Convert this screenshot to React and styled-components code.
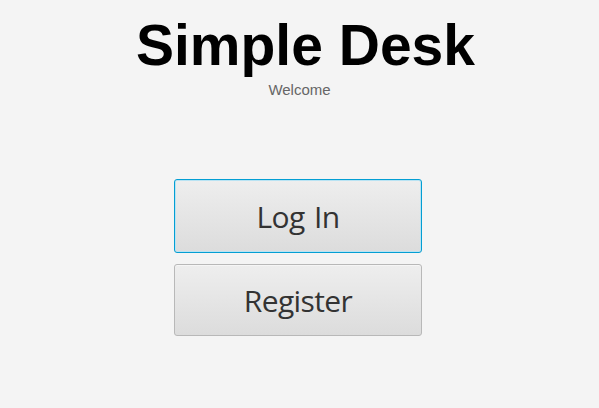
import React from 'react';
import styled, { createGlobalStyle } from 'styled-components';

const GlobalStyle = createGlobalStyle`
  html, body {
    margin: 0;
    padding: 0;
    background: #f4f4f4;
  }
`;

const Screen = styled.div`
  width: 599px;
  height: 408px;
  display: flex;
  flex-direction: column;
  align-items: center;
  background: #f4f4f4;
  padding-top: 17px;
  box-sizing: border-box;
`;

const Title = styled.h1`
  margin: 0;
  padding-left: 12px;
  font-family: 'Liberation Sans', Arial, sans-serif;
  font-weight: bold;
  font-size: 57px;
  line-height: 57px;
  color: #000;
`;

const Subtitle = styled.div`
  margin-top: 8px;
  font-family: 'Liberation Sans', Arial, sans-serif;
  font-size: 15px;
  line-height: 15px;
  color: #666;
`;

const Actions = styled.div`
  margin-top: 82px;
  margin-right: 3px;
  display: flex;
  flex-direction: column;
  gap: 11px;
`;

const Button = styled.button`
  width: 248px;
  height: ${props => (props.$focused ? '74px' : '72px')};
  box-sizing: border-box;
  border-radius: 3px;
  border: 1px solid ${props => (props.$focused ? '#039ed3' : '#b8b8b8')};
  box-shadow: ${props =>
    props.$focused ? 'inset 0 0 0 1px #b9e3f3' : 'inset 0 1px 0 #f6f6f6'};
  background: linear-gradient(to bottom, #eeeeee, #dcdcdc);
  font-family: 'Open Sans', 'Noto Sans', sans-serif;
  font-size: 30px;
  letter-spacing: -0.6px;
  word-spacing: 2px;
  color: #333;
  padding: 0;
  cursor: pointer;
`;

export default function App() {
  return (
    <>
      <GlobalStyle />
      <Screen>
        <Title>Simple Desk</Title>
        <Subtitle>Welcome</Subtitle>
        <Actions>
          <Button $focused>Log In</Button>
          <Button>Register</Button>
        </Actions>
      </Screen>
    </>
  );
}
